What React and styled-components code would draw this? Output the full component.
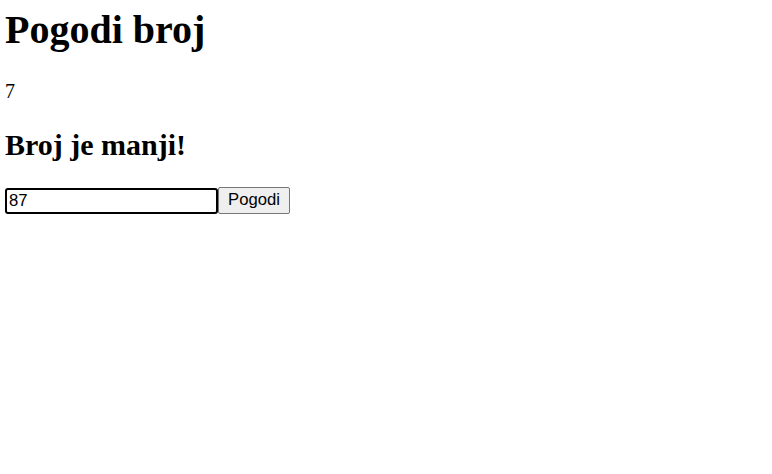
import React, { useState } from "react";
import styled, { createGlobalStyle } from "styled-components";

const Global = createGlobalStyle`
  body {
    margin: 0 0 0 5px;
    font-family: "Liberation Serif", "Times New Roman", serif;
    font-size: 20px;
    background: #fff;
    color: #000;
  }
`;

const Title = styled.h1`
  font-size: 40px;
  font-weight: bold;
  margin: 6px 0 26.8px;
`;

const Secret = styled.p`
  margin: 20px 0;
`;

const Hint = styled.h2`
  font-size: 30px;
  font-weight: bold;
  margin: 24.9px 0;
`;

const GuessRow = styled.div`
  display: flex;
  align-items: flex-end;
`;

const GuessInput = styled.input`
  box-sizing: border-box;
  width: 213px;
  height: 26px;
  padding: 0 2px;
  border: 2px solid #000;
  border-radius: 3px;
  outline: none;
  font-family: "Liberation Sans", Arial, sans-serif;
  font-size: 16.67px;
  color: #000;
  background: #fff;
`;

const GuessButton = styled.button`
  box-sizing: border-box;
  width: 72px;
  height: 27px;
  padding: 0;
  border: 1px solid #767676;
  border-radius: 2px;
  background: #efefef;
  font-family: "Liberation Sans", Arial, sans-serif;
  font-size: 16.67px;
  color: #000;
`;

export default function App() {
  const [guess, setGuess] = useState("87");
  return (
    <>
      <Global />
      <Title>Pogodi broj</Title>
      <Secret>7</Secret>
      <Hint>Broj je manji!</Hint>
      <GuessRow>
        <GuessInput value={guess} onChange={(e) => setGuess(e.target.value)} />
        <GuessButton>Pogodi</GuessButton>
      </GuessRow>
    </>
  );
}
